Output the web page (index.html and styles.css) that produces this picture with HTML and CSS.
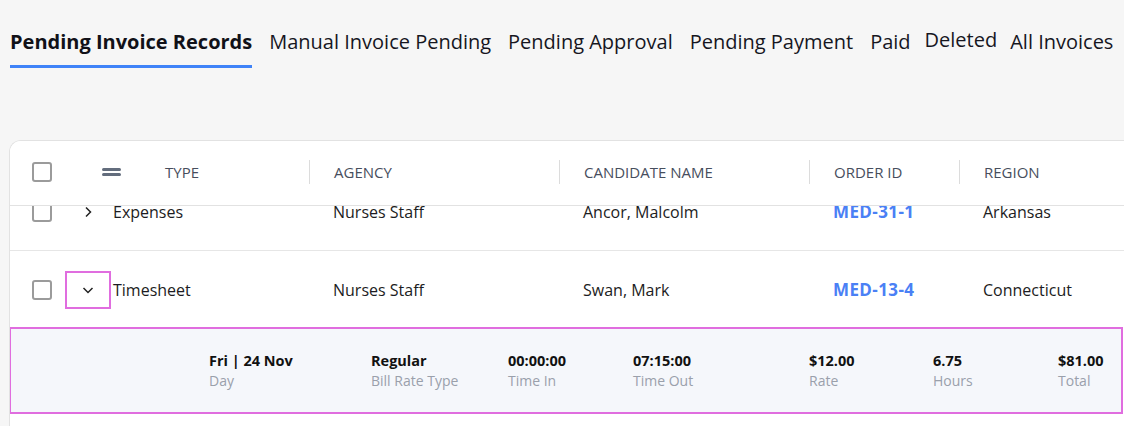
FILE: index.html
```html
<!DOCTYPE html>
<html>
<head>
<meta charset="utf-8">
<link rel="stylesheet" href="styles.css">
</head>
<body>
<nav class="tabs">
  <span class="tab active">Pending Invoice Records</span>
  <span class="tab">Manual Invoice Pending</span>
  <span class="tab">Pending Approval</span>
  <span class="tab">Pending Payment</span>
  <span class="tab">Paid</span>
  <span class="tab raised">Deleted</span>
  <span class="tab tight">All Invoices</span>
</nav>

<section class="card">
  <div class="grid head">
    <div class="c-check"><span class="checkbox"></span></div>
    <div class="c-type-head">
      <svg class="drag" width="19" height="8" viewBox="0 0 19 8"><rect x="0" y="0" width="19" height="3" rx="1.5"/><rect x="0" y="5" width="19" height="3" rx="1.5"/></svg>
      <span>TYPE</span>
    </div>
    <div class="hcell">AGENCY</div>
    <div class="hcell">CANDIDATE NAME</div>
    <div class="hcell">ORDER ID</div>
    <div class="hcell">REGION</div>
  </div>

  <div class="viewport">
    <div class="rows">
      <div class="grid row">
        <div class="c-check"><span class="checkbox"></span></div>
        <div class="c-exp">
          <span class="exp-btn">
            <svg width="8" height="12" viewBox="0 0 8 12"><path d="M2 1.5 L6.5 6 L2 10.5" fill="none" stroke="#222" stroke-width="1.5"/></svg>
          </span>
        </div>
        <div class="c-type">Expenses</div>
        <div class="cell">Nurses Staff</div>
        <div class="cell">Ancor, Malcolm</div>
        <div class="cell order">MED-31-1</div>
        <div class="cell">Arkansas</div>
      </div>

      <div class="grid row open">
        <div class="c-check"><span class="checkbox"></span></div>
        <div class="c-exp">
          <span class="exp-btn focused">
            <svg width="12" height="8" viewBox="0 0 12 8"><path d="M1.5 2 L6 6.5 L10.5 2" fill="none" stroke="#222" stroke-width="1.5"/></svg>
          </span>
        </div>
        <div class="c-type">Timesheet</div>
        <div class="cell">Nurses Staff</div>
        <div class="cell">Swan, Mark</div>
        <div class="cell order">MED-13-4</div>
        <div class="cell">Connecticut</div>
      </div>

      <div class="detail">
        <div class="d"><b>Fri | 24 Nov</b><span>Day</span></div>
        <div class="d"><b>Regular</b><span>Bill Rate Type</span></div>
        <div class="d"><b>00:00:00</b><span>Time In</span></div>
        <div class="d"><b>07:15:00</b><span>Time Out</span></div>
        <div class="d"><b>$12.00</b><span>Rate</span></div>
        <div class="d"><b>6.75</b><span>Hours</span></div>
        <div class="d"><b>$81.00</b><span>Total</span></div>
      </div>
    </div>
  </div>
</section>
</body>
</html>
```
FILE: styles.css
```css
html, body {
  margin: 0;
  overflow: hidden;
}
body {
  background: #f6f6f6;
  font-family: "Open Sans", "Noto Sans", sans-serif;
  color: #1f1f24;
  height: 426px;
}

/* Tabs */
.tabs {
  display: flex;
  align-items: flex-start;
  gap: 17px;
  padding: 28px 0 0 10px;
  white-space: nowrap;
}
.tab {
  font-size: 20px;
  line-height: 27px;
  color: #16161f;
  padding-bottom: 10px;
  border-bottom: 3px solid transparent;
}
.tab.active {
  font-weight: 700;
  color: #111118;
  border-bottom-color: #3f83f8;
}
.tab.raised {
  margin-top: -2px;
  margin-left: -3px;
}
.tab.tight {
  margin-left: -4px;
}

/* Card */
.card {
  margin: 72px 0 0 9px;
  width: 1140px;
  background: #fff;
  border: 1px solid #e2e2e2;
  border-right: none;
  border-bottom: none;
  border-radius: 12px 0 0 0;
  height: 285px;
  overflow: hidden;
}

.grid {
  display: grid;
  grid-template-columns: 56px 44px 199px 250px 250px 150px 1fr;
  align-items: center;
}

.head {
  height: 62px;
  padding-bottom: 2px;
  border-bottom: 1px solid #e2e2e2;
  font-size: 15px;
  color: #474e5d;
  background: #fff;
}

.c-check {
  padding-left: 22px;
  display: flex;
  align-items: center;
}
.checkbox {
  width: 20px;
  height: 20px;
  box-sizing: border-box;
  border: 2px solid #9b9b9b;
  border-radius: 3px;
  background: #fff;
}

.c-type-head {
  grid-column: 2 / span 2;
  display: flex;
  align-items: center;
  padding-left: 36px;
}
.drag {
  fill: #636d7d;
  margin-right: 44px;
}

.hcell {
  border-left: 1px solid #dcdcdc;
  padding-left: 24px;
  height: 24px;
  line-height: 24px;
  white-space: nowrap;
}

/* Body */
.viewport {
  height: 220px;
  overflow: hidden;
}
.rows {
  margin-top: -32px;
}
.row {
  height: 76px;
  border-bottom: 1px solid #e6e6e6;
  font-size: 16px;
  line-height: 12px;
  color: #1c1c22;
}
.row.open {
  height: 74px;
  padding-top: 2px;
  border-bottom: none;
}
.c-exp {
  display: flex;
  justify-content: center;
}
.exp-btn {
  width: 46px;
  height: 38px;
  box-sizing: border-box;
  margin: 0 -1px;
  display: flex;
  align-items: center;
  justify-content: center;
  border: 2px solid transparent;
}
.exp-btn.focused {
  border-color: #e06ddf;
}
.c-type {
  padding-left: 3px;
  white-space: nowrap;
}
.cell {
  padding-left: 24px;
  white-space: nowrap;
}
.order {
  font-weight: 700;
  font-size: 17px;
  letter-spacing: 0.4px;
  color: #4a80f5;
}

/* Expanded detail */
.detail {
  margin-left: -1px;
  width: 1114px;
  height: 87px;
  box-sizing: border-box;
  border: 2px solid #e06ddf;
  background: #f5f7fb;
  display: grid;
  grid-template-columns: 162px 137px 125px 176px 124px 125px 1fr;
  align-items: center;
  padding-left: 198px;
}
.d {
  display: flex;
  flex-direction: column;
  white-space: nowrap;
}
.d b {
  font-size: 14.5px;
  line-height: 20px;
  font-weight: 700;
  color: #111;
}
.d span {
  font-size: 14px;
  line-height: 20px;
  color: #9aa0ab;
}
```
